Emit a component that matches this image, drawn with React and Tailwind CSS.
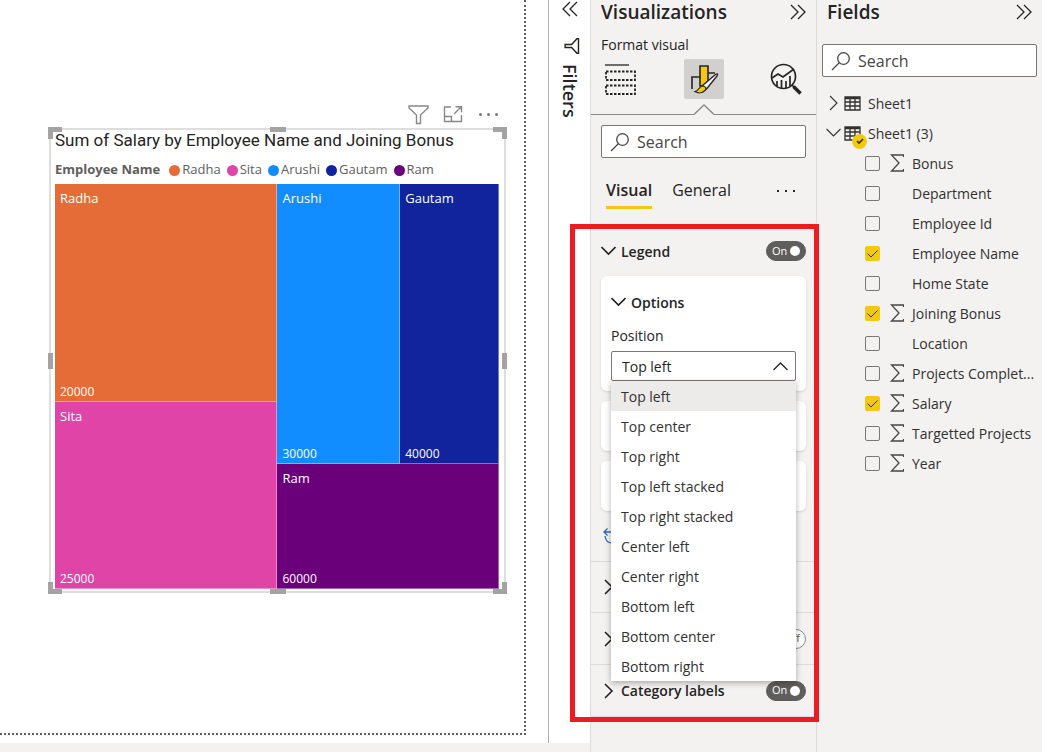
import React, { useState } from 'react';

const positions = [
  'Top left',
  'Top center',
  'Top right',
  'Top left stacked',
  'Top right stacked',
  'Center left',
  'Center right',
  'Bottom left',
  'Bottom center',
  'Bottom right',
];

const legendItems = [
  { name: 'Radha', color: 'bg-[#e66c37]' },
  { name: 'Sita', color: 'bg-[#e044a7]' },
  { name: 'Arushi', color: 'bg-[#118dff]' },
  { name: 'Gautam', color: 'bg-[#12239e]' },
  { name: 'Ram', color: 'bg-[#6b007b]' },
];

const fields = [
  { name: 'Bonus', numeric: true },
  { name: 'Department' },
  { name: 'Employee Id' },
  { name: 'Employee Name', checked: true },
  { name: 'Home State' },
  { name: 'Joining Bonus', numeric: true, checked: true },
  { name: 'Location' },
  { name: 'Projects Complet...', numeric: true },
  { name: 'Salary', numeric: true, checked: true },
  { name: 'Targetted Projects', numeric: true },
  { name: 'Year', numeric: true },
];

// Icons
function Icon({ w, h, children, className = '', strokeWidth = 1.3 }) {
  return (
    <svg
      width={w}
      height={h}
      viewBox={`0 0 ${w} ${h}`}
      fill="none"
      stroke="currentColor"
      strokeWidth={strokeWidth}
      className={`shrink-0 ${className}`}
      aria-hidden="true"
    >
      {children}
    </svg>
  );
}

function DoubleChevron({ className = '' }) {
  return (
    <Icon w={16} h={16} className={className}>
      <path d="M1 1l7 7-7 7M8 1l7 7-7 7" />
    </Icon>
  );
}

function ChevronDown({ strokeWidth = 1.6 }) {
  return (
    <Icon w={15} h={10} strokeWidth={strokeWidth}>
      <path d="M.5 1l7 7 7-7" />
    </Icon>
  );
}

function ChevronRight({ strokeWidth = 1.6, className = '' }) {
  return (
    <Icon w={10} h={16} strokeWidth={strokeWidth} className={className}>
      <path d="M1 1l7 7-7 7" />
    </Icon>
  );
}

function Funnel({ className = '', size = 21, strokeWidth = 1.4 }) {
  return (
    <svg width={size} height={size} viewBox="0 0 21 21" fill="none" stroke="currentColor" strokeWidth={strokeWidth} className={className} aria-hidden="true">
      <path d="M1 2h19v2l-7.500 7v8.500h-4v-8.500L1 4z" />
    </svg>
  );
}

function FocusIcon() {
  return (
    <Icon w={20} h={18} strokeWidth={1.4}>
      <path d="M8 2H1.500v14.500h17V10M1.500 11.500h7v5M11 9l7-7M12.500 1.700h6v5.500" />
    </Icon>
  );
}

function SearchIcon() {
  return (
    <Icon w={20} h={20} className="text-[#484644]">
      <circle cx="12.500" cy="7.500" r="5.800" />
      <path d="M8.500 11.500L1 19" />
    </Icon>
  );
}

function BuildIcon() {
  return (
    <Icon w={32} h={32} strokeWidth={1.800}>
      <path d="M0 2h24" strokeWidth="1.300" />
      <path d="M1 8.500h29v8.500H1zM1 22.500h29V31H1z" strokeDasharray="2.500 1.500" />
    </Icon>
  );
}

function FormatIcon() {
  return (
    <Icon w={30} h={30} strokeWidth={1.600}>
      <path d="M3 25V13h8M19 9h7" />
      <path d="M11 22V2h8v15l-4 5z" fill="#f2c811" />
      <path d="M13.500 21.500L26.500 10.500c2-1.200 2.800-.500 1.500 1.500L17.500 25z" fill="#f3f2f1" strokeWidth="1.300" />
      <path d="M6 27.500c4-.500 3.500-5 7.500-5.500 3 0 4.500 2.500 2.500 4.500-2.800 2.700-7 3-10 1z" fill="#f2c811" strokeWidth="1.200" />
    </Icon>
  );
}

function AnalyticsIcon() {
  return (
    <Icon w={32} h={32} strokeWidth={1.700}>
      <circle cx="13.500" cy="13.500" r="12" />
      <path d="M2 15l6-4 5 3 11-8" />
      <path d="M7 23v-5M11.500 25v-8M16 25v-7M20 23V13" />
      <path d="M22 22l2 2" />
      <path d="M23.500 23.500l7 7" strokeWidth="3.600" />
    </Icon>
  );
}

function TableIcon() {
  return (
    <Icon w={17} h={15} strokeWidth={1.3} className="text-[#323130]">
      <path d="M1 1h15v13H1zM1 2.500h15M1 6h15M1 10h15M6 3v11M11 3v11" />
    </Icon>
  );
}

function SigmaIcon() {
  return (
    <Icon w={14} h={18} className="text-[#484644]">
      <path d="M13.500 3V1H1.500L9 9l-7.500 8h12v-2" />
    </Icon>
  );
}

function RevertIcon() {
  return (
    <Icon w={16} h={16} className="text-[#2b6cab]">
      <path d="M4.500.500L1 4l3.500 3.500M1 4h12M2 8c.500 4 3 7 7 7" />
    </Icon>
  );
}

function Toggle({ on = true, label }) {
  const [value, setValue] = useState(on);
  return (
    <button
      role="switch"
      aria-checked={value}
      aria-label={label}
      onClick={() => setValue(!value)}
      className={`flex h-5 w-10 items-center justify-between rounded-full border px-[5px] text-[11px] ${
        value ? 'border-[#605e5c] bg-[#605e5c] text-white' : 'flex-row-reverse border-[#8a8886] bg-white text-[#605e5c]'
      }`}
    >
      {value ? 'On' : 'Off'}
      <span className={`size-2.5 rounded-full ${value ? 'bg-white' : 'bg-[#605e5c]'}`} />
    </button>
  );
}

function SearchBox({ id, className = '' }) {
  return (
    <label htmlFor={id} className={`flex h-[33px] items-center gap-[7px] rounded-xs border border-[#7a7876] bg-white px-2 ${className}`}>
      <SearchIcon />
      <input
        id={id}
        type="text"
        placeholder="Search"
        aria-label="Search"
        className="w-full min-w-0 bg-transparent text-[16px] text-[#484644] outline-none placeholder:text-[#484644]"
      />
    </label>
  );
}

// Treemap visual
function Tile({ name, value, className }) {
  return (
    <div className={`flex flex-col justify-between border-r border-b border-white/40 px-[5px] pt-[5px] text-[12px] leading-[18px] text-white ${className}`}>
      <span className="text-[13px]">{name}</span>
      <span>{value}</span>
    </div>
  );
}

function SelectionHandles() {
  return (
    <>
      <span className="absolute -top-[3px] -left-[3px] h-3 w-3.5 border-t-[5px] border-l-[5px] border-[#a3a3a3]" />
      <span className="absolute -top-[3px] -right-[3px] h-3 w-3.5 border-t-[5px] border-r-[5px] border-[#a3a3a3]" />
      <span className="absolute -bottom-[3px] -left-[3px] h-3 w-3.5 border-b-[5px] border-l-[5px] border-[#a3a3a3]" />
      <span className="absolute -right-[3px] -bottom-[3px] h-3 w-3.5 border-r-[5px] border-b-[5px] border-[#a3a3a3]" />
      <span className="absolute -top-[3px] left-1/2 h-[5px] w-4 -translate-x-1/2 bg-[#a3a3a3]" />
      <span className="absolute -bottom-[3px] left-1/2 h-[5px] w-4 -translate-x-1/2 bg-[#a3a3a3]" />
      <span className="absolute top-1/2 -left-[3px] h-4 w-[5px] -translate-y-1/2 bg-[#a3a3a3]" />
      <span className="absolute top-1/2 -right-[3px] h-4 w-[5px] -translate-y-1/2 bg-[#a3a3a3]" />
    </>
  );
}

function TreemapVisual() {
  return (
    <div className="mr-[18px] ml-[49px]">
      <div className="flex h-5 items-center justify-end gap-[14px] pr-1.5 text-[#8a8886]">
        <button aria-label="Filters on visual"><Funnel /></button>
        <button aria-label="Focus mode"><FocusIcon /></button>
        <button aria-label="More options" className="flex gap-[5px] px-0.5">
          <span className="size-[3px] rounded-full bg-[#7a7876]" />
          <span className="size-[3px] rounded-full bg-[#7a7876]" />
          <span className="size-[3px] rounded-full bg-[#7a7876]" />
        </button>
      </div>
      <div className="relative mt-1 border-2 border-[#dedede] pr-[5px] pb-[2px] pl-1">
        <h2 className="h-5 font-[Roboto,sans-serif] text-[17px] leading-5 whitespace-nowrap text-[#252423]">
          Sum of Salary by Employee Name and Joining Bonus
        </h2>
        <div className="mt-[10px] flex h-5 items-center gap-1.5 text-[13px] whitespace-nowrap text-[#605e5c]">
          <span className="mr-[3px] font-bold">Employee Name</span>
          {legendItems.map((item) => (
            <span key={item.name} className="flex items-center gap-0.5">
              <span className={`size-[11px] rounded-full ${item.color}`} />
              {item.name}
            </span>
          ))}
        </div>
        <div className="mt-1 grid h-[405px] grid-cols-[223fr_222fr]">
          <div className="grid grid-rows-[218fr_187fr]">
            <Tile name="Radha" value="20000" className="bg-[#e66c37]" />
            <Tile name="Sita" value="25000" className="bg-[#e044a7]" />
          </div>
          <div className="grid grid-rows-[280fr_125fr]">
            <div className="grid grid-cols-[123fr_99fr]">
              <Tile name="Arushi" value="30000" className="bg-[#118dff]" />
              <Tile name="Gautam" value="40000" className="bg-[#12239e]" />
            </div>
            <Tile name="Ram" value="60000" className="bg-[#6b007b]" />
          </div>
        </div>
        <SelectionHandles />
      </div>
    </div>
  );
}

function FiltersPane() {
  return (
    <aside className="flex w-[42px] shrink-0 flex-col items-center border-l border-[#b3b0ad] bg-white">
      <button aria-label="Expand filters" className="mt-[1px]">
        <DoubleChevron className="rotate-180" />
      </button>
      <Funnel size={16} strokeWidth={1.9} className="mt-[21px] ml-1 rotate-90 text-[#252423]" />
      <h2 className="mt-2.5 text-[18px] leading-5 font-semibold [writing-mode:vertical-rl]">Filters</h2>
    </aside>
  );
}

function LegendCard() {
  const [position, setPosition] = useState('Top left');
  return (
    <div className="mx-2.5 rounded-md bg-white px-2.5 pt-3.5 pb-2.5 shadow-sm">
      <button className="flex h-6 items-center gap-[5px] text-[14px] font-semibold">
        <ChevronDown />
        Options
      </button>
      <label htmlFor="legend-position" className="mt-3 block h-5 text-[14px] leading-5">
        Position
      </label>
      <div className="relative mt-[5px]">
        <select
          id="legend-position"
          value={position}
          onChange={(e) => setPosition(e.target.value)}
          className="block h-[30px] w-full appearance-none rounded-xs border border-[#7a7876] bg-white px-2.5 text-[14px]"
        >
          {positions.map((p) => (
            <option key={p}>{p}</option>
          ))}
        </select>
        <span className="pointer-events-none absolute top-2.5 right-2 rotate-180">
          <ChevronDown strokeWidth={1.3} />
        </span>
        <ul role="listbox" aria-label="Position" className="absolute top-full right-0 left-0 z-10 bg-white shadow-[0_2px_6px_rgba(0,0,0,0.3)]">
          {positions.map((p) => (
            <li
              key={p}
              role="option"
              aria-selected={p === position}
              onClick={() => setPosition(p)}
              className={`flex h-[30px] items-center px-2.5 text-[14px] text-[#323130] ${p === position ? 'bg-[#edebe9]' : ''}`}
            >
              {p}
            </li>
          ))}
        </ul>
      </div>
    </div>
  );
}

function VisualizationsPane() {
  return (
    <aside className="relative w-[226px] shrink-0 border-l border-[#dddbda]">
      <header className="flex h-6 items-center justify-between px-2.5">
        <h2 className="text-[19px] leading-6 font-semibold">Visualizations</h2>
        <button aria-label="Collapse visualizations"><DoubleChevron /></button>
      </header>
      <h3 className="mt-[11px] px-2.5 text-[14px] leading-5 font-medium">Format visual</h3>
      <div className="mt-1 flex h-10 items-center justify-between pr-3.5 pl-3.5">
        <button aria-label="Build visual"><BuildIcon /></button>
        <button aria-label="Format visual" className="flex size-10 items-center justify-center rounded-xs bg-[#d2d0ce]">
          <FormatIcon />
        </button>
        <button aria-label="Analytics"><AnalyticsIcon /></button>
      </div>
      <div className="mt-[5px] flex h-[11px] text-[#8a8886]">
        <span className="flex-1 border-b border-current" />
        <Icon w={20} h={11}>
          <path d="M0 10.500l10-9.500 10 9.500" />
        </Icon>
        <span className="flex-1 border-b border-current" />
      </div>
      <SearchBox id="format-search" className="mx-2.5 mt-2.5" />
      <nav className="mt-[18px] flex h-8 items-start gap-5 px-[15px] text-[16px] leading-[29px]">
        <button className="h-[33px] border-b-3 border-[#f2c811] pb-px font-semibold">Visual</button>
        <button>General</button>
        <button aria-label="More" className="mt-3.5 mr-1.5 ml-auto flex gap-1.5">
          <span className="size-0.5 bg-[#252423]" />
          <span className="size-0.5 bg-[#252423]" />
          <span className="size-0.5 bg-[#252423]" />
        </button>
      </nav>
      <div className="mt-[33px] mb-[15px] flex h-5 items-center justify-between px-2.5">
        <button className="flex items-center gap-[5px] text-[14px] font-semibold">
          <ChevronDown />
          Legend
        </button>
        <Toggle label="Legend" />
      </div>
      <LegendCard />
      <div className="mx-2.5 mt-2.5 h-[50px] rounded-md bg-white shadow-sm" />
      <div className="mx-2.5 mt-2.5 h-[50px] rounded-md bg-white shadow-sm" />
      <button aria-label="Reset to default" className="mt-[17px] ml-3 block">
        <RevertIcon />
      </button>
      <div className="mt-[17px] border-t border-[#dddbda]">
        <div className="flex h-[51px] items-center border-b border-[#dddbda] px-[13px]">
          <button aria-label="Colors"><ChevronRight /></button>
        </div>
        <div className="flex h-[52px] items-center justify-between border-b border-[#dddbda] pr-2.5 pl-[13px]">
          <button aria-label="Data labels"><ChevronRight /></button>
          <Toggle on={false} label="Data labels" />
        </div>
        <div className="flex h-[52px] items-center justify-between border-b border-[#dddbda] pr-2.5 pl-[13px]">
          <button className="flex items-center gap-[7px] text-[14px] font-semibold">
            <ChevronRight />
            Category labels
          </button>
          <Toggle label="Category labels" />
        </div>
      </div>
      <div className="pointer-events-none absolute top-[224px] -right-[3px] -left-[21px] z-20 h-[498px] border-5 border-[#ed1c24]" />
    </aside>
  );
}

function FieldRow({ field }) {
  return (
    <li>
      <label className="flex h-[30px] items-center pl-12">
        <span className="grid shrink-0">
          <input
            type="checkbox"
            defaultChecked={field.checked}
            className="peer col-start-1 row-start-1 size-[15px] appearance-none rounded-xs border border-[#7a7876] checked:border-[#f2c811] checked:bg-[#f2c811]"
          />
          <Icon w={15} h={15} strokeWidth={1} className="pointer-events-none invisible col-start-1 row-start-1 peer-checked:visible">
            <path d="M2.500 7.500l3.500 3.500 6.500-6.500" />
          </Icon>
        </span>
        <span className="flex w-8 shrink-0 pl-2.5">{field.numeric && <SigmaIcon />}</span>
        <span className="whitespace-nowrap">{field.name}</span>
      </label>
    </li>
  );
}

function FieldsPane() {
  return (
    <aside className="w-[226px] shrink-0 border-l border-[#dddbda]">
      <header className="flex h-6 items-center justify-between px-2.5">
        <h2 className="text-[19px] leading-6 font-semibold">Fields</h2>
        <button aria-label="Collapse fields"><DoubleChevron /></button>
      </header>
      <SearchBox id="fields-search" className="mx-[5px] mt-5" />
      <div className="mt-[11px] text-[14px] text-[#323130]">
        <button className="flex h-[30px] w-full items-center pl-3">
          <ChevronRight strokeWidth={1.1} className="mr-[5px]" />
          <TableIcon />
          <span className="ml-[7px]">Sheet1</span>
        </button>
        <button className="flex h-[30px] w-full items-center pl-[9px]">
          <ChevronDown strokeWidth={1.1} />
          <span className="relative ml-[3px]">
            <TableIcon />
            <span className="absolute top-2 left-2 flex size-[15px] items-center justify-center rounded-full bg-[#f2c811]">
              <Icon w={8} h={8} strokeWidth={1.600}>
                <path d="M1 4l2 2 4-4" />
              </Icon>
            </span>
          </span>
          <span className="ml-[7px]">Sheet1 (3)</span>
        </button>
        <ul>
          {fields.map((field) => (
            <FieldRow key={field.name} field={field} />
          ))}
        </ul>
      </div>
    </aside>
  );
}

export default function App() {
  return (
    <div className="flex min-h-screen bg-[#f3f2f1] font-['Open_Sans','Noto_Sans',sans-serif] text-[#252423]">
      <div className="flex min-w-0 flex-1 pb-[9px]">
        <main className="min-w-0 flex-1 bg-white pr-[22px] pb-2">
          <div className="h-full border-r-2 border-b-2 border-dotted border-[#605e5c] pt-[104px]">
            <TreemapVisual />
          </div>
        </main>
        <FiltersPane />
      </div>
      <VisualizationsPane />
      <FieldsPane />
    </div>
  );
}
